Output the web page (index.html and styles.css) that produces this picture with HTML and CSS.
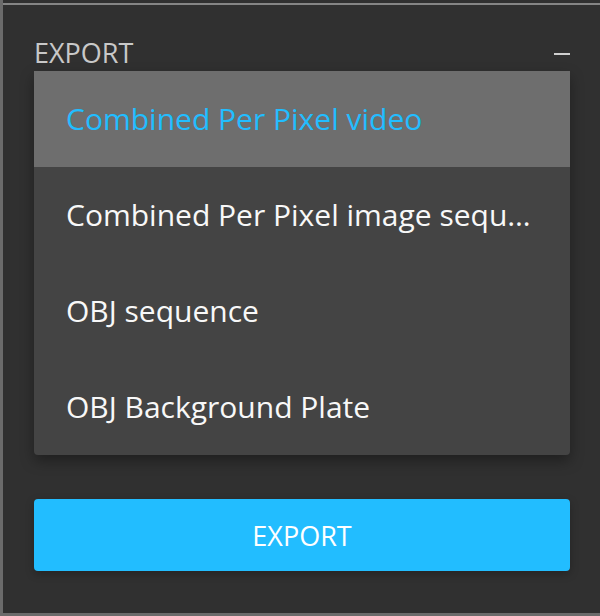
FILE: index.html
```html
<!DOCTYPE html>
<html>
<head>
<meta charset="utf-8">
<link rel="stylesheet" href="styles.css">
</head>
<body>
<div class="frame">
  <div class="panel">
    <div class="header">
      <span class="title">EXPORT</span>
      <span class="minus"></span>
    </div>
    <ul class="dropdown">
      <li class="option selected">Combined Per Pixel video</li>
      <li class="option">Combined Per Pixel image sequence</li>
      <li class="option">OBJ sequence</li>
      <li class="option">OBJ Background Plate</li>
    </ul>
    <button class="export-btn">EXPORT</button>
  </div>
</div>
</body>
</html>
```

FILE: styles.css
```css
html, body {
  margin: 0;
  padding: 0;
  background: #303030;
}
body {
  font-family: "Open Sans", "Noto Sans", sans-serif;
}
.frame {
  box-sizing: border-box;
  width: 600px;
  height: 616px;
  border-left: 3px solid #6b6b6b;
  border-bottom: 3px solid #6b6b6b;
  padding-top: 3px;
  background: #303030;
}
.panel {
  border-top: 2px solid #858585;
  padding: 33px 30px 0 31px;
}
.header {
  display: flex;
  justify-content: space-between;
  align-items: center;
  height: 30px;
  margin-bottom: 3px;
}
.title {
  font-size: 27px;
  line-height: 30px;
  color: #c8c8c8;
}
.minus {
  width: 16px;
  height: 2px;
  margin-top: 2px;
  background: #cfcfcf;
}
.dropdown {
  list-style: none;
  margin: 0;
  padding: 0;
  background: #444444;
  border-radius: 0 0 4px 4px;
  box-shadow: 0 6px 14px rgba(0, 0, 0, 0.35);
  overflow: hidden;
}
.option {
  height: 96px;
  line-height: 96px;
  padding: 0 32px;
  font-size: 30px;
  color: #f8f8f8;
  white-space: nowrap;
  overflow: hidden;
  text-overflow: ellipsis;
}
.option.selected {
  background: #6e6e6e;
  color: #22bdff;
}
.export-btn {
  display: block;
  width: 100%;
  height: 72px;
  margin-top: 44px;
  border: none;
  border-radius: 4px;
  background: #22bdff;
  color: #ffffff;
  font-family: "Open Sans", "Noto Sans", sans-serif;
  font-size: 27px;
  box-shadow: 0 3px 8px rgba(0, 0, 0, 0.25);
  padding: 0;
}
```
